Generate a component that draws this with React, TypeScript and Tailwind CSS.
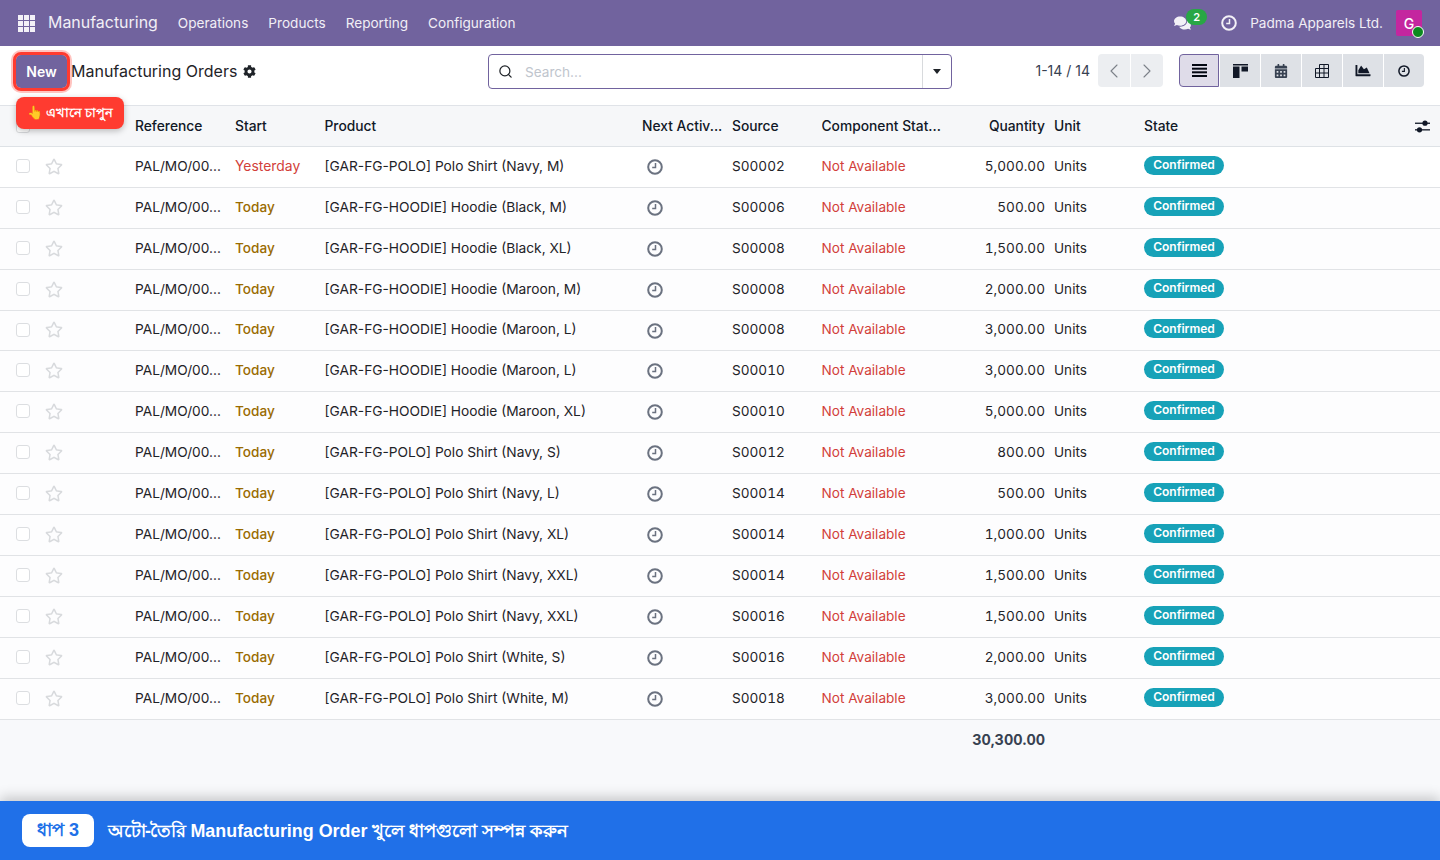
import { ChevronLeft, ChevronRight, Search } from "lucide-react";
import { FaCalendarAlt, FaChartArea, FaCog, FaComments, FaRegStar } from "react-icons/fa";

const ROWS = [
  ["Yesterday", "[GAR-FG-POLO] Polo Shirt (Navy, M)", "S00002", "5,000.00"],
  ["Today", "[GAR-FG-HOODIE] Hoodie (Black, M)", "S00006", "500.00"],
  ["Today", "[GAR-FG-HOODIE] Hoodie (Black, XL)", "S00008", "1,500.00"],
  ["Today", "[GAR-FG-HOODIE] Hoodie (Maroon, M)", "S00008", "2,000.00"],
  ["Today", "[GAR-FG-HOODIE] Hoodie (Maroon, L)", "S00008", "3,000.00"],
  ["Today", "[GAR-FG-HOODIE] Hoodie (Maroon, L)", "S00010", "3,000.00"],
  ["Today", "[GAR-FG-HOODIE] Hoodie (Maroon, XL)", "S00010", "5,000.00"],
  ["Today", "[GAR-FG-POLO] Polo Shirt (Navy, S)", "S00012", "800.00"],
  ["Today", "[GAR-FG-POLO] Polo Shirt (Navy, L)", "S00014", "500.00"],
  ["Today", "[GAR-FG-POLO] Polo Shirt (Navy, XL)", "S00014", "1,000.00"],
  ["Today", "[GAR-FG-POLO] Polo Shirt (Navy, XXL)", "S00014", "1,500.00"],
  ["Today", "[GAR-FG-POLO] Polo Shirt (Navy, XXL)", "S00016", "1,500.00"],
  ["Today", "[GAR-FG-POLO] Polo Shirt (White, S)", "S00016", "2,000.00"],
  ["Today", "[GAR-FG-POLO] Polo Shirt (White, M)", "S00018", "3,000.00"],
];

const COLS = "grid grid-cols-[135px_100px_89.5px_317.5px_90px_89.5px_141px_91.5px_90px_1fr] items-center";

function ClockIcon({ className }: { className: string }) {
  return (
    <svg viewBox="0 0 16 16" className={className} fill="none" stroke="currentColor">
      <circle cx="8" cy="8" r="6.8" strokeWidth="2" />
      <path d="M8.5 4v4.5H5.2" strokeWidth="1.5" />
    </svg>
  );
}

function ListIcon() {
  return (
    <svg viewBox="0 0 15 13" className="h-[13px] w-[15px]" fill="#030712">
      <rect width="15" height="2" />
      <rect y="3.7" width="15" height="2" />
      <rect y="7.3" width="15" height="2" />
      <rect y="11" width="15" height="2" />
    </svg>
  );
}

function KanbanIcon() {
  return (
    <svg viewBox="0 0 15 14" className="h-[14px] w-[15px]" fill="#111827">
      <rect width="15" height="1.5" />
      <rect y="2.5" width="6.5" height="11.5" />
      <rect x="8.5" y="2.5" width="6.5" height="5" />
    </svg>
  );
}

function TableIcon() {
  return (
    <svg viewBox="0 0 14 14" className="h-[14px] w-[14px]" fill="none" stroke="#111827" strokeWidth="1">
      <path d="M4.5 .5h9v13H.5V4.5h13M.5 9h13M4.5.5v13M9 .5v13" />
    </svg>
  );
}

function SlidersIcon() {
  return (
    <svg viewBox="0 0 15 13" className="h-[13px] w-[15px]" fill="#111827">
      <rect y="2.6" width="15" height="1.3" />
      <rect y="9.2" width="15" height="1.3" />
      <circle cx="10" cy="3.2" r="2.6" />
      <circle cx="4.5" cy="9.8" r="2.6" />
    </svg>
  );
}

function ViewButton({ active, children }: { active?: boolean; children: React.ReactNode }) {
  return (
    <div
      className={
        active
          ? "flex h-[33px] w-10 items-center justify-center rounded-l border border-[#71639e] bg-[#dfdce9]"
          : "flex h-[33px] w-10 items-center justify-center bg-[#dee1e6] text-[#111827] last:rounded-r"
      }
    >
      {children}
    </div>
  );
}

export default function App() {
  return (
    <div className="flex h-[860px] flex-col overflow-hidden bg-[#f8f9fb] font-['Inter',sans-serif] text-[13.6px] text-[#1f2328]">
      <nav className="flex h-[46px] shrink-0 items-center bg-[#71639e] text-white">
        <svg viewBox="0 0 17 17" className="ml-[18px] h-[17px] w-[17px]" fill="#f3f1f7">
          {[0, 6, 12].map((x) =>
            [0, 6, 12].map((y) => <rect key={`${x}-${y}`} x={x} y={y} width="5" height="5" />),
          )}
        </svg>
        <span className="ml-[13px] text-[15.95px] text-[#f1eff6]">Manufacturing</span>
        <div className="ml-5 flex gap-5 text-[#f1eff6]">
          <span>Operations</span>
          <span>Products</span>
          <span>Reporting</span>
          <span>Configuration</span>
        </div>
        <div className="ml-auto flex items-center">
          <div className="relative mr-[30px]">
            <FaComments className="h-4 w-[17px] text-[#f3f1f7]" />
            <span className="absolute left-[12px] top-[-6px] flex h-[16px] w-[21px] items-center justify-center rounded-full bg-[#28a745] text-[11px] font-semibold">
              2
            </span>
          </div>
          <ClockIcon className="h-4 w-4 text-[#f3f1f7]" />
          <span className="ml-[13px] text-[#f1eff6]">Padma Apparels Ltd.</span>
          <div className="relative ml-[13px] mr-[18px] flex h-[26px] w-[26px] items-center justify-center rounded-[2px] bg-[#c4269f] text-[14px] font-medium">
            G
            <span className="absolute bottom-[-2px] right-[-2px] h-[12px] w-[12px] rounded-full border-[1.5px] border-white bg-[#0c8a1f]" />
          </div>
        </div>
      </nav>

      <header className="relative flex h-[60px] shrink-0 items-center border-b border-[#e0e3e8] bg-white pb-[8px]">
        <button className="ml-4 flex h-[33px] w-[51px] items-center justify-center rounded-[5px] bg-[#71639e] text-[14px] font-semibold text-white outline-[3px] outline-[#ff3b30] shadow-[0_0_0_5px_rgba(255,59,48,0.3)]">
          New
        </button>
        <span className="mb-px ml-[4px] text-[16px] text-[#1f2328]">Manufacturing Orders</span>
        <FaCog className="ml-[6px] h-[13px] w-[13px] text-[#1f2328]" />

        <div className="absolute left-[488px] top-2 flex h-[35px] w-[464px] items-center rounded border border-[#71639e]">
          <Search className="ml-[9px] h-[15px] w-[15px] text-[#1f2328]" strokeWidth={2} />
          <span className="ml-[12px] mt-px text-[#c0c5cd]">Search...</span>
          <div className="ml-auto flex h-full w-[29px] items-center justify-center border-l border-[#d8dadd]">
            <span className="border-x-[4.5px] border-t-[5px] border-x-transparent border-t-[#1f2328]" />
          </div>
        </div>

        <div className="mb-[2px] ml-auto flex items-center">
          <span className="text-[14px] text-[#374151]">1-14 / 14</span>
          <div className="ml-2 flex h-[33px] gap-px">
            <div className="flex w-8 items-center justify-center rounded-l bg-[#eceef1]">
              <ChevronLeft className="h-[24px] w-[24px] text-[#7b8088]" strokeWidth={1.1} />
            </div>
            <div className="flex w-8 items-center justify-center rounded-r bg-[#eceef1]">
              <ChevronRight className="h-[24px] w-[24px] text-[#7b8088]" strokeWidth={1.1} />
            </div>
          </div>
          <div className="ml-4 mr-4 flex gap-px">
            <ViewButton active>
              <ListIcon />
            </ViewButton>
            <ViewButton>
              <KanbanIcon />
            </ViewButton>
            <ViewButton>
              <FaCalendarAlt className="h-[14px] w-[14px] text-[#374151]" />
            </ViewButton>
            <ViewButton>
              <TableIcon />
            </ViewButton>
            <ViewButton>
              <FaChartArea className="h-[15px] w-[16px]" />
            </ViewButton>
            <ViewButton>
              <ClockIcon className="h-3 w-3" />
            </ViewButton>
          </div>
        </div>

        <div className="absolute left-4 top-[51px] z-10 flex h-8 w-[108px] items-center justify-center rounded-lg bg-[#ff3b30] text-[13px] font-bold text-white shadow-[0_2px_6px_rgba(0,0,0,0.25)]">
          👆 এখানে চাপুন
        </div>
      </header>

      <div className={`${COLS} h-[41px] shrink-0 border-b border-[#dee2e6] bg-[#f6f7f9] text-[13.8px] font-medium text-[#111827]`}>
        <div className="pl-4">
          <span className="block h-[14px] w-[14px] rounded-[3px] border border-[#d8dadd] bg-white" />
        </div>
        <span>Reference</span>
        <span>Start</span>
        <span>Product</span>
        <span className="truncate">Next Activ...</span>
        <span>Source</span>
        <span className="truncate">Component Stat...</span>
        <span className="pr-[9px] text-right">Quantity</span>
        <span>Unit</span>
        <div className="flex items-center">
          <span>State</span>
          <span className="ml-auto mr-[10px]">
            <SlidersIcon />
          </span>
        </div>
      </div>

      <div className="bg-white">
        {ROWS.map(([start, product, source, qty], i) => (
          <div
            key={i}
            className={`${COLS} border-b border-[#e1e3e6] ${i === 4 ? "h-10" : "h-[41px]"} ${i === 0 ? "bg-white" : "bg-[#fdfdfe]"}`}
          >
            <div className="mb-[2px] flex items-center pl-4">
              <span className="block h-[14px] w-[14px] rounded-[3px] border border-[#dcdee1] bg-white" />
              <FaRegStar className="ml-[15px] h-[17px] w-[18px] text-[#d8dadd]" />
            </div>
            <span className="mb-[2px] text-[13.7px]">PAL/MO/00...</span>
            <span className={start === "Today" ? "mb-[2px] font-medium text-[#9a6b01]" : "mb-[2px] text-[13.9px] text-[#d23f3a]"}>{start}</span>
            <span className="mb-[2px] text-[13.75px]">{product}</span>
            <div className="pl-[5px]">
              <ClockIcon className="h-4 w-4 text-[#6b7280]" />
            </div>
            <span className="mb-[2px] tabular-nums">{source}</span>
            <span className="mb-[2px] text-[#d23f3a]">Not Available</span>
            <span className="mb-[2px] pr-[9px] text-right tabular-nums">{qty}</span>
            <span className="mb-[2px]">Units</span>
            <div className="mb-1">
              <span className="flex h-[19px] w-20 items-center justify-center rounded-full bg-[#17a2b8] text-[12px] font-semibold text-white">
                Confirmed
              </span>
            </div>
          </div>
        ))}
      </div>

      <div className="flex h-10 shrink-0 items-center justify-end pr-[395px] text-[14.4px] font-bold tabular-nums text-[#374151]">30,300.00</div>

      <footer className="mt-auto flex h-[59px] shrink-0 items-center bg-[#2070e8] pl-[22px] font-['Liberation_Sans',sans-serif] text-white shadow-[0_-4px_12px_rgba(0,0,0,0.2)]">
        <span className="flex h-[33px] w-[72px] items-center justify-center rounded-lg bg-white text-[18px] font-bold text-[#2070e8]">
          ধাপ 3
        </span>
        <span className="ml-[14px] mt-px text-[17.9px] font-bold">
          <span className="tracking-[-0.5px]">অটো-তৈরি</span> Manufacturing Order খুলে ধাপগুলো সম্পন্ন করুন
        </span>
      </footer>
    </div>
  );
}
